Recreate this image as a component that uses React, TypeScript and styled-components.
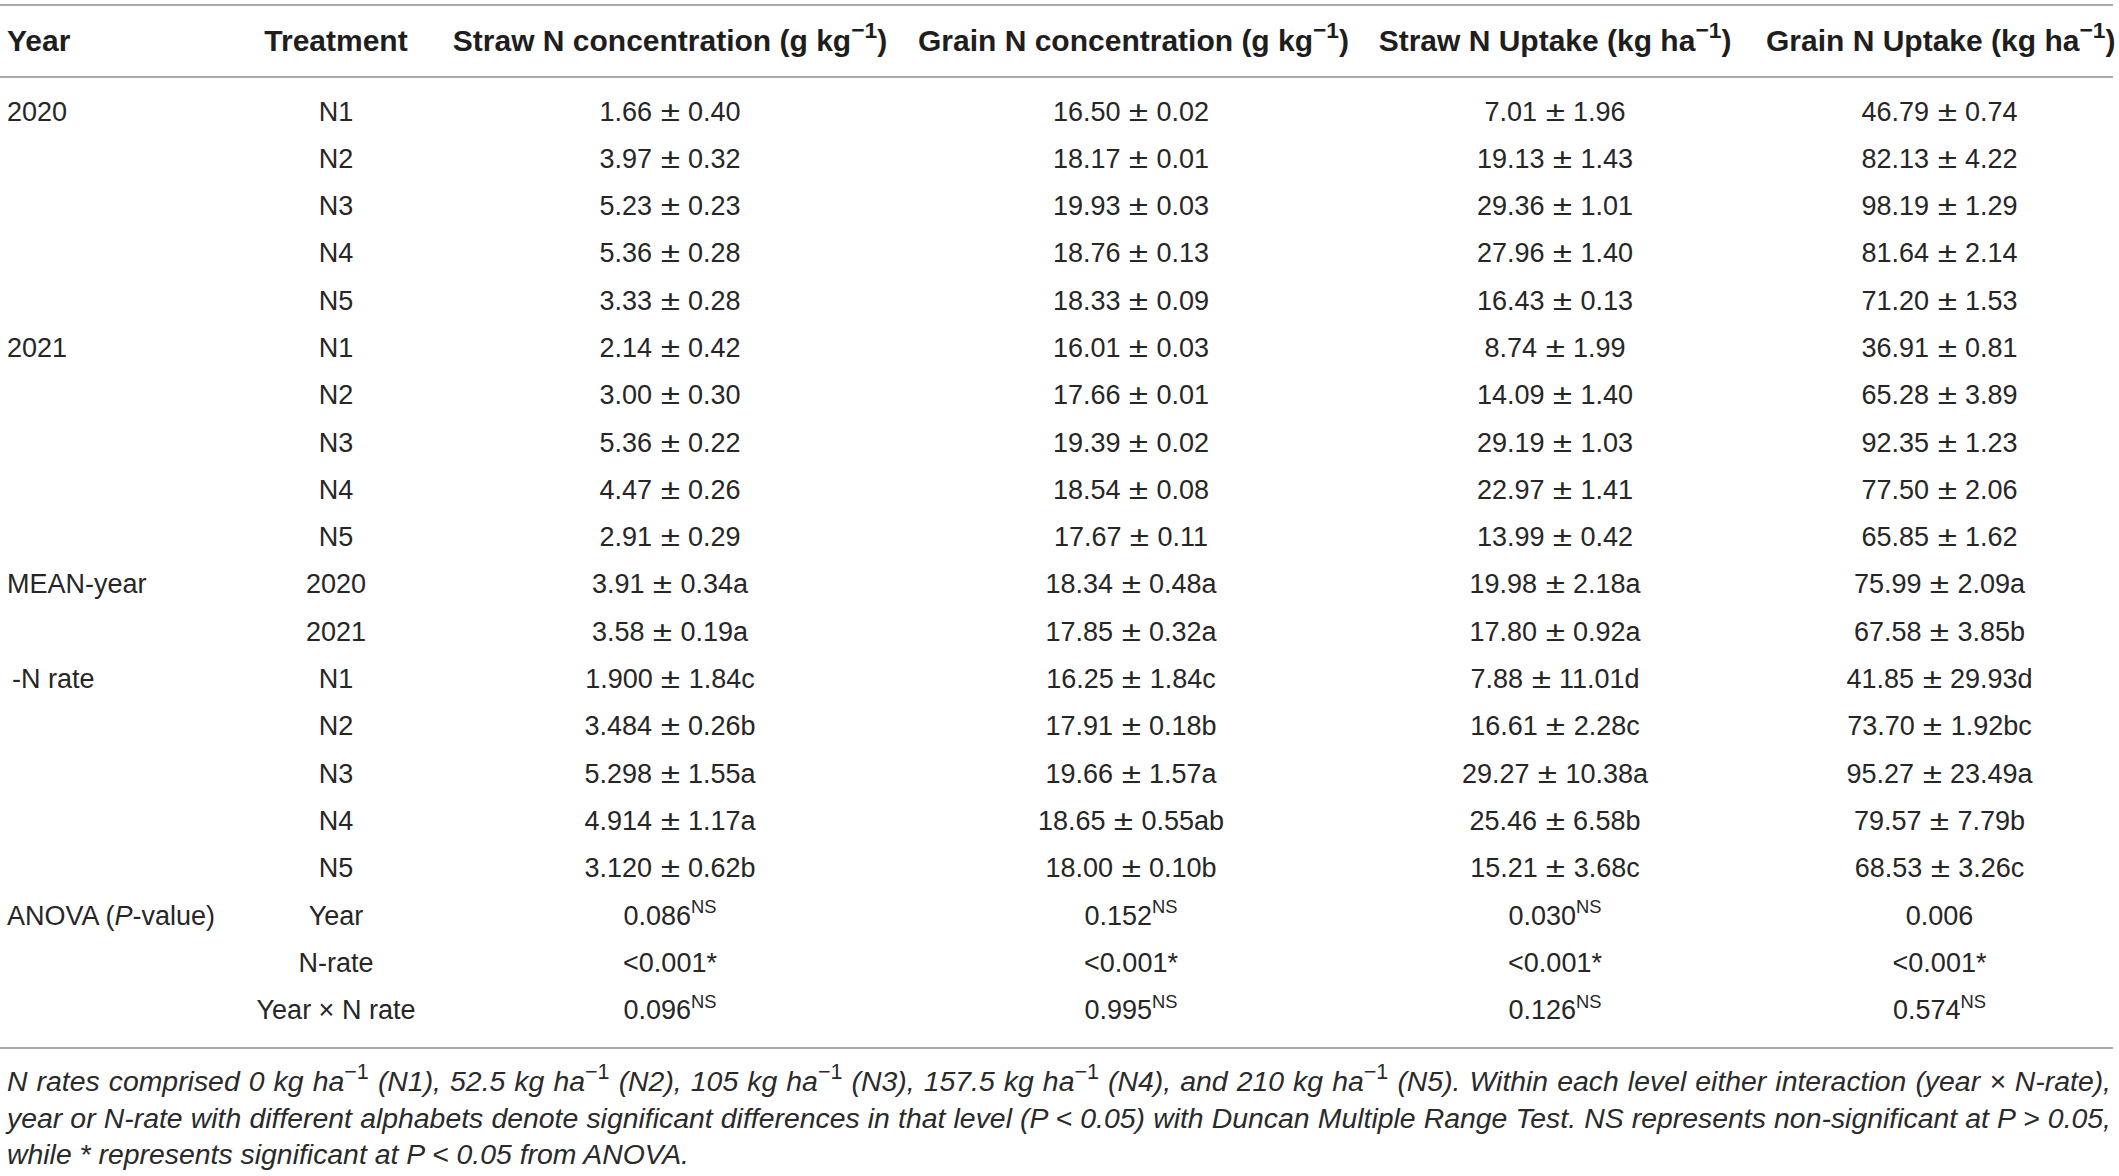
import React from "react";
import styled, { createGlobalStyle } from "styled-components";

const GlobalStyle = createGlobalStyle`
  html, body { margin: 0; padding: 0; background: #ffffff; }
  body { font-family: "Liberation Sans", Arial, Helvetica, sans-serif; color: #222; }
`;

const Page = styled.div`
  width: 2113px;
  padding-top: 4px;
`;

const Table = styled.table`
  width: 100%;
  table-layout: fixed;
  border-collapse: collapse;
  border-top: 2px solid #a9a9a9;
  border-bottom: 2px solid #a9a9a9;
`;

const HeadCell = styled.th<{ $align?: "left" | "center" }>`
  height: 70px;
  padding: 0 0 0 ${(p) => (p.$align === "left" ? "7px" : "0")};
  text-align: ${(p) => p.$align ?? "center"};
  font-size: 30px;
  font-weight: 700;
  color: #1e1e1e;
  white-space: nowrap;
  border-bottom: 2px solid #a9a9a9;
  vertical-align: middle;
`;

const Row = styled.tr`
  &:first-child td { padding-top: 10.5px; }
  &:last-child td { padding-bottom: 12.4px; }
`;

const Cell = styled.td<{ $align?: "left" | "center"; $indent?: number }>`
  height: 47.3px;
  line-height: 47.3px;
  padding: 0 0 0 ${(p) => (p.$align === "left" ? `${p.$indent ?? 7}px` : "0")};
  text-align: ${(p) => p.$align ?? "center"};
  font-size: 27px;
  color: #262626;
  white-space: nowrap;
  vertical-align: middle;
`;

const PlusMinus = styled.span`
  display: inline-block;
  margin: 0 3px;
  transform: scaleX(1.3);
`;

const Sup = styled.sup<{ $size?: number }>`
  font-size: ${(p) => p.$size ?? 0.68}em;
  line-height: 0;
  position: relative;
  top: -0.08em;
  vertical-align: super;
  font-style: normal;
`;

const Footnote = styled.div`
  margin-top: 14.5px;
  padding-left: 7px;
  width: 2104px;
  font-size: 28.4px;
  line-height: 36.5px;
  font-style: italic;
  color: #2a2a2a;
`;

const FootLine = styled.div<{ $justify?: boolean }>`
  white-space: ${(p) => (p.$justify ? "normal" : "nowrap")};
  text-align: ${(p) => (p.$justify ? "justify" : "left")};
  text-align-last: ${(p) => (p.$justify ? "justify" : "left")};
`;

const Ital = styled.i`
  font-style: italic;
`;

const Minus1: React.FC = () => <Sup $size={0.76}>−1</Sup>;

const Unit: React.FC<{ u: string }> = ({ u }) => (
  <>
    {u}
    <Minus1 />
  </>
);

const pm = (s: string) => {
  const [a, b] = s.split(" ± ");
  return (
    <>
      {a} <PlusMinus>±</PlusMinus> {b}
    </>
  );
};

type DataRow = {
  label?: React.ReactNode;
  labelIndent?: number;
  treat: React.ReactNode;
  vals: React.ReactNode[];
};

const ns = (v: string) => (
  <>
    {v}
    <Sup>NS</Sup>
  </>
);

const raw: { label?: React.ReactNode; labelIndent?: number; treat: string; vals: string[] }[] = [
  { label: "2020", treat: "N1", vals: ["1.66 ± 0.40", "16.50 ± 0.02", "7.01 ± 1.96", "46.79 ± 0.74"] },
  { treat: "N2", vals: ["3.97 ± 0.32", "18.17 ± 0.01", "19.13 ± 1.43", "82.13 ± 4.22"] },
  { treat: "N3", vals: ["5.23 ± 0.23", "19.93 ± 0.03", "29.36 ± 1.01", "98.19 ± 1.29"] },
  { treat: "N4", vals: ["5.36 ± 0.28", "18.76 ± 0.13", "27.96 ± 1.40", "81.64 ± 2.14"] },
  { treat: "N5", vals: ["3.33 ± 0.28", "18.33 ± 0.09", "16.43 ± 0.13", "71.20 ± 1.53"] },
  { label: "2021", treat: "N1", vals: ["2.14 ± 0.42", "16.01 ± 0.03", "8.74 ± 1.99", "36.91 ± 0.81"] },
  { treat: "N2", vals: ["3.00 ± 0.30", "17.66 ± 0.01", "14.09 ± 1.40", "65.28 ± 3.89"] },
  { treat: "N3", vals: ["5.36 ± 0.22", "19.39 ± 0.02", "29.19 ± 1.03", "92.35 ± 1.23"] },
  { treat: "N4", vals: ["4.47 ± 0.26", "18.54 ± 0.08", "22.97 ± 1.41", "77.50 ± 2.06"] },
  { treat: "N5", vals: ["2.91 ± 0.29", "17.67 ± 0.11", "13.99 ± 0.42", "65.85 ± 1.62"] },
  { label: "MEAN-year", treat: "2020", vals: ["3.91 ± 0.34a", "18.34 ± 0.48a", "19.98 ± 2.18a", "75.99 ± 2.09a"] },
  { treat: "2021", vals: ["3.58 ± 0.19a", "17.85 ± 0.32a", "17.80 ± 0.92a", "67.58 ± 3.85b"] },
  { label: "-N rate", labelIndent: 12, treat: "N1", vals: ["1.900 ± 1.84c", "16.25 ± 1.84c", "7.88 ± 11.01d", "41.85 ± 29.93d"] },
  { treat: "N2", vals: ["3.484 ± 0.26b", "17.91 ± 0.18b", "16.61 ± 2.28c", "73.70 ± 1.92bc"] },
  { treat: "N3", vals: ["5.298 ± 1.55a", "19.66 ± 1.57a", "29.27 ± 10.38a", "95.27 ± 23.49a"] },
  { treat: "N4", vals: ["4.914 ± 1.17a", "18.65 ± 0.55ab", "25.46 ± 6.58b", "79.57 ± 7.79b"] },
  { treat: "N5", vals: ["3.120 ± 0.62b", "18.00 ± 0.10b", "15.21 ± 3.68c", "68.53 ± 3.26c"] },
];

const rows: DataRow[] = [
  ...raw.map((r) => ({ ...r, vals: r.vals.map(pm) })),
  {
    label: (
      <>
        ANOVA (<Ital>P</Ital>-value)
      </>
    ),
    treat: "Year",
    vals: [ns("0.086"), ns("0.152"), ns("0.030"), "0.006"],
  },
  { treat: "N-rate", vals: ["<0.001*", "<0.001*", "<0.001*", "<0.001*"] },
  { treat: "Year × N rate", vals: [ns("0.096"), ns("0.995"), ns("0.126"), ns("0.574")] },
];

const colWidths = [250, 172, 496, 426, 422, 347];

export default function App() {
  return (
    <>
      <GlobalStyle />
      <Page>
        <Table>
          <colgroup>
            {colWidths.map((w, i) => (
              <col key={i} style={{ width: `${w}px` }} />
            ))}
          </colgroup>
          <thead>
            <tr>
              <HeadCell $align="left">Year</HeadCell>
              <HeadCell>Treatment</HeadCell>
              <HeadCell>
                Straw N concentration (g <Unit u="kg" />)
              </HeadCell>
              <HeadCell>
                Grain N concentration (g <Unit u="kg" />)
              </HeadCell>
              <HeadCell>
                Straw N Uptake (kg <Unit u="ha" />)
              </HeadCell>
              <HeadCell>
                Grain N Uptake (kg <Unit u="ha" />)
              </HeadCell>
            </tr>
          </thead>
          <tbody>
            {rows.map((r, i) => (
              <Row key={i}>
                <Cell $align="left" $indent={r.labelIndent}>
                  {r.label ?? ""}
                </Cell>
                <Cell>{r.treat}</Cell>
                {r.vals.map((v, j) => (
                  <Cell key={j}>{v}</Cell>
                ))}
              </Row>
            ))}
          </tbody>
        </Table>
        <Footnote>
          <FootLine $justify>
            N rates comprised 0 kg ha<Minus1 /> (N1), 52.5 kg ha<Minus1 /> (N2), 105 kg ha<Minus1 /> (N3), 157.5 kg
            ha<Minus1 /> (N4), and 210 kg ha<Minus1 /> (N5). Within each level either interaction (year × N-rate),
          </FootLine>
          <FootLine $justify>
            year or N-rate with different alphabets denote significant differences in that level (P &lt; 0.05) with
            Duncan Multiple Range Test. NS represents non-significant at P &gt; 0.05,
          </FootLine>
          <FootLine>while * represents significant at P &lt; 0.05 from ANOVA.</FootLine>
        </Footnote>
      </Page>
    </>
  );
}
